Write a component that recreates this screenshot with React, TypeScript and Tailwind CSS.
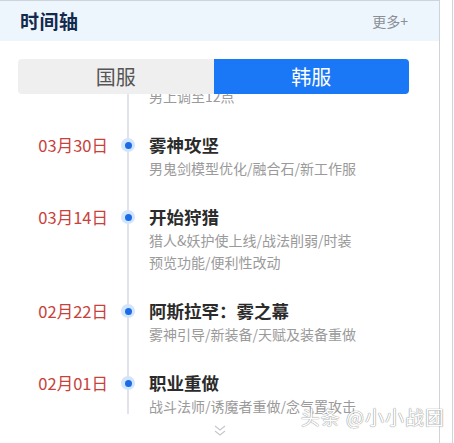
import React, { useState } from 'react';

interface Item {
  date: string;
  title: string;
  desc: string[];
}

const items: Item[] = [
  { date: '04月12日', title: '版本更新', desc: ['每日副本重置时间由早', '男上调至12点'] },
  { date: '03月30日', title: '雾神攻坚', desc: ['男鬼剑模型优化/融合石/新工作服'] },
  { date: '03月14日', title: '开始狩猎', desc: ['猎人&妖护使上线/战法削弱/时装', '预览功能/便利性改动'] },
  { date: '02月22日', title: '阿斯拉罕：雾之幕', desc: ['雾神引导/新装备/天赋及装备重做'] },
  { date: '02月01日', title: '职业重做', desc: ['战斗法师/诱魔者重做/念气置攻击', '属性调整'] },
];

const font = { fontFamily: '"Microsoft YaHei", "Noto Sans CJK SC", "Noto Sans", sans-serif' };

const App: React.FC = () => {
  const [tab, setTab] = useState(1);

  return (
    <div className="w-[454px] h-[443px] bg-white flex overflow-hidden" style={font}>
      <div className="w-[440px] h-full border-t border-r border-[#cfd4da] flex flex-col">
        {/* Header */}
        <div className="h-[40px] bg-[#eef6fd] flex items-center justify-between pl-[20px] pr-[31px]">
          <span className="text-[19px] font-bold text-[#132a4e] tracking-[0.5px]">时间轴</span>
          <span className="text-[14px] text-[#8a8f96]">更多+</span>
        </div>

        {/* Tabs */}
        <div className="mt-[18px] ml-[18px] w-[391px] h-[35px] flex rounded-[4px] overflow-hidden">
          {['国服', '韩服'].map((t, i) => (
            <button
              key={t}
              onClick={() => setTab(i)}
              className={`flex-1 text-[20px] leading-[35px] ${i === tab ? 'bg-[#1a78f6] text-white' : 'bg-[#efefef] text-[#555]'}`}
            >
              {t}
            </button>
          ))}
        </div>

        {/* Timeline */}
        <div className="h-[320px] overflow-hidden">
          <div className="-mt-[55px]">
            {items.map((item) => (
              <div key={item.title} className="flex pb-[26px]">
                <div className="w-[108px] shrink-0 text-right text-[16.5px] leading-[24px] text-[#c8413b]">
                  {item.date}
                </div>
                <div className="w-[40px] shrink-0 relative flex justify-center">
                  <div className="absolute left-[19px] top-[-40px] bottom-[-40px] w-[2px] bg-[#e1e5eb]" />
                  <div className="relative mt-[5px] w-[14px] h-[14px] rounded-full bg-[#d3e5fc] flex items-center justify-center">
                    <div className="w-[7px] h-[7px] rounded-full bg-[#1a6ce6]" />
                  </div>
                </div>
                <div className="pl-[1px]">
                  <div className="text-[17.5px] leading-[24px] font-bold text-[#2b2b2b]">{item.title}</div>
                  {item.desc.map((d) => (
                    <div key={d} className="text-[14px] leading-[22px] text-[#9a9a9a]">
                      {d}
                    </div>
                  ))}
                </div>
              </div>
            ))}
          </div>
        </div>

        {/* More */}
        <div className="flex-1 relative flex justify-center pt-[10px]">
          <svg width="14" height="14" viewBox="0 0 14 14" fill="none" stroke="#c4c8ce" strokeWidth="1.2">
            <path d="M2 2 L7 6 L12 2" />
            <path d="M2 7 L7 11 L12 7" />
          </svg>
          <span className="absolute right-[-6px] top-[-11px] text-[19px] text-white tracking-[1px] [text-shadow:0_0_1px_#8a8a8a,0_0_1px_#8a8a8a]">
            头条 @小小战团
          </span>
        </div>
      </div>
      <div className="w-[12px]" />
      <div className="w-[2px] h-full border-l border-[#cfd4da]" />
    </div>
  );
};

export default App;
